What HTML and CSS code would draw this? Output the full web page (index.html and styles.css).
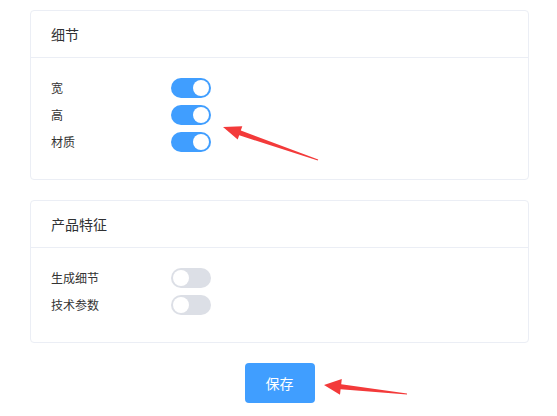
FILE: index.html
```html
<!DOCTYPE html>
<html lang="zh">
<head>
<meta charset="utf-8">
<link rel="stylesheet" href="styles.css">
</head>
<body>
<div class="page">
  <section class="card">
    <div class="card-header">细节</div>
    <div class="card-body">
      <div class="row"><span class="label">宽</span><span class="switch on"><span class="knob"></span></span></div>
      <div class="row"><span class="label">高</span><span class="switch on"><span class="knob"></span></span></div>
      <div class="row"><span class="label">材质</span><span class="switch on"><span class="knob"></span></span></div>
    </div>
  </section>
  <section class="card">
    <div class="card-header">产品特征</div>
    <div class="card-body">
      <div class="row"><span class="label">生成细节</span><span class="switch"><span class="knob"></span></span></div>
      <div class="row"><span class="label">技术参数</span><span class="switch"><span class="knob"></span></span></div>
    </div>
  </section>
  <div class="actions"><button class="btn">保存</button></div>
</div>
<svg class="arrows" width="557" height="416" viewBox="0 0 557 416">
  <polygon fill="#f33a3a" points="223,127 242.3,126.3 240.8,130.5 318.2,159.5 317.8,160.5 239.2,135.3 237.7,139.5"/>
  <polygon fill="#f33a3a" points="324,385 341.8,378.9 341.2,384.3 407,393.4 407,394.6 340.6,389.3 340,394.8"/>
</svg>
</body>
</html>
```
FILE: styles.css
```css
html, body { margin: 0; padding: 0; background: #fff; }
body {
  font-family: "Noto Sans CJK SC", "Microsoft YaHei", sans-serif;
  color: #303133;
  width: 557px;
  height: 416px;
  overflow: hidden;
  position: relative;
}
.page {
  padding: 10px 28px 0 30px;
  display: flex;
  flex-direction: column;
  gap: 20px;
}
.card {
  border: 1px solid #ebeef5;
  border-radius: 4px;
  background: #fff;
}
.card-header {
  height: 46px;
  line-height: 46px;
  padding: 0 20px;
  font-size: 14px;
  color: #303133;
  border-bottom: 1px solid #ebeef5;
}
.card-body {
  padding: 20px 20px 27px;
  display: flex;
  flex-direction: column;
  gap: 7px;
}
.row {
  display: flex;
  align-items: center;
  height: 20px;
}
.label {
  width: 120px;
  font-size: 12px;
  color: #333;
  line-height: 20px;
}
.switch {
  position: relative;
  width: 40px;
  height: 20px;
  border-radius: 10px;
  background: #dcdfe6;
  box-sizing: border-box;
}
.switch.on { background: #409eff; }
.knob {
  position: absolute;
  top: 2px;
  left: 2px;
  width: 16px;
  height: 16px;
  border-radius: 50%;
  background: #fff;
}
.switch.on .knob { left: 22px; }
.actions {
  display: flex;
  justify-content: center;
}
.btn {
  width: 70px;
  height: 40px;
  border: none;
  border-radius: 4px;
  background: #409eff;
  color: #fff;
  font-family: inherit;
  font-size: 14px;
  padding: 0;
}
.arrows {
  position: absolute;
  left: 0;
  top: 0;
  pointer-events: none;
}
```
